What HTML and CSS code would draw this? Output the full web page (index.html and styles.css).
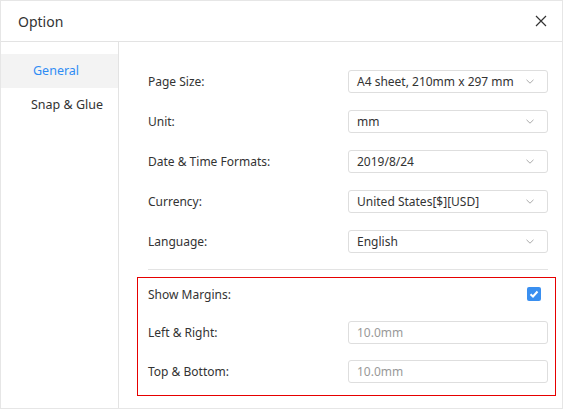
FILE: index.html
```html
<!DOCTYPE html>
<html>
<head>
<meta charset="utf-8">
<link rel="stylesheet" href="styles.css">
</head>
<body>
<div class="dialog">
  <div class="header">
    <span class="title">Option</span>
    <svg class="close" width="12" height="12" viewBox="0 0 12 12"><path d="M1 1L11 11M11 1L1 11" stroke="#333" stroke-width="1.2" fill="none"/></svg>
  </div>
  <div class="body">
    <div class="sidebar">
      <div class="nav-item active">General</div>
      <div class="nav-item">Snap &amp; Glue</div>
    </div>
    <div class="main">
      <div class="row"><span class="label">Page Size:</span><div class="select"><span>A4 sheet, 210mm x 297 mm</span><svg class="chev" width="8" height="5" viewBox="0 0 8 5"><path d="M0.5 0.8L4 4.2L7.5 0.8" stroke="#aaa" stroke-width="1" fill="none"/></svg></div></div>
      <div class="row"><span class="label">Unit:</span><div class="select"><span>mm</span><svg class="chev" width="8" height="5" viewBox="0 0 8 5"><path d="M0.5 0.8L4 4.2L7.5 0.8" stroke="#aaa" stroke-width="1" fill="none"/></svg></div></div>
      <div class="row"><span class="label">Date &amp; Time Formats:</span><div class="select"><span>2019/8/24</span><svg class="chev" width="8" height="5" viewBox="0 0 8 5"><path d="M0.5 0.8L4 4.2L7.5 0.8" stroke="#aaa" stroke-width="1" fill="none"/></svg></div></div>
      <div class="row"><span class="label">Currency:</span><div class="select"><span>United States[$][USD]</span><svg class="chev" width="8" height="5" viewBox="0 0 8 5"><path d="M0.5 0.8L4 4.2L7.5 0.8" stroke="#aaa" stroke-width="1" fill="none"/></svg></div></div>
      <div class="row"><span class="label">Language:</span><div class="select"><span>English</span><svg class="chev" width="8" height="5" viewBox="0 0 8 5"><path d="M0.5 0.8L4 4.2L7.5 0.8" stroke="#aaa" stroke-width="1" fill="none"/></svg></div></div>
      <div class="sep"></div>
      <div class="margins">
        <div class="mrow first"><span class="label">Show Margins:</span>
          <span class="check"><svg width="14" height="14" viewBox="0 0 14 14"><path d="M3.5 7.2L6 9.5L10.5 4.5" stroke="#fff" stroke-width="2" fill="none"/></svg></span>
        </div>
        <div class="mrow"><span class="label">Left &amp; Right:</span><div class="input">10.0mm</div></div>
        <div class="mrow"><span class="label">Top &amp; Bottom:</span><div class="input">10.0mm</div></div>
      </div>
    </div>
  </div>
</div>
</body>
</html>
```

FILE: styles.css
```css
* { box-sizing: border-box; }
html, body { margin: 0; padding: 0; background: #fff; }
body {
  font-family: "Noto Sans", "Open Sans", sans-serif;
  font-size: 12px;
  color: #333;
}
.dialog {
  width: 563px;
  height: 409px;
  border: 1px solid #e6e6e6;
  display: flex;
  flex-direction: column;
  background: #fff;
}
.header {
  height: 41px;
  flex: none;
  border-bottom: 1px solid #e3e3e3;
  display: flex;
  align-items: center;
  justify-content: space-between;
  padding: 0 15px 0 17px;
}
.title { font-size: 14px; color: #333; }
.close { display: block; }
.body { flex: 1; display: flex; }
.sidebar {
  width: 118px;
  flex: none;
  border-right: 1px solid #e3e3e3;
  padding-top: 12px;
}
.nav-item {
  height: 34px;
  line-height: 34px;
  padding-left: 30px;
  font-size: 12.5px;
  color: #333;
}
.nav-item.active {
  background: #f3f3f3;
  color: #2f8cf3;
  padding-left: 32px;
}
.main {
  flex: 1;
  padding: 28px 14px 0 29px;
}
.row {
  display: flex;
  align-items: center;
  justify-content: space-between;
  height: 23px;
  margin-bottom: 17px;
}
.label { color: #333; }
.select {
  width: 200px;
  height: 23px;
  border: 1px solid #dedede;
  border-radius: 3px;
  display: flex;
  align-items: center;
  justify-content: space-between;
  padding: 0 13px 0 8px;
}
.chev { display: block; }
.sep {
  height: 1px;
  background: #e3e3e3;
  margin-top: -1px;
}
.margins {
  margin: 7px -8px 0 -11px;
  box-shadow: inset 0 0 0 1px rgb(230, 0, 0);
  height: 119px;
  padding: 5px 8px 0 11px;
}
.mrow {
  display: flex;
  align-items: center;
  justify-content: space-between;
  height: 23px;
  margin-bottom: 16px;
}
.mrow.first { height: 24px; margin-bottom: 15px; }
.check {
  width: 14px;
  height: 14px;
  border-radius: 2px;
  background: #3a8ff0;
  margin-right: 7px;
  display: block;
}
.check svg { display: block; }
.input {
  width: 200px;
  height: 23px;
  border: 1px solid #dedede;
  border-radius: 3px;
  padding-left: 8px;
  line-height: 21px;
  color: #999;
}
```
